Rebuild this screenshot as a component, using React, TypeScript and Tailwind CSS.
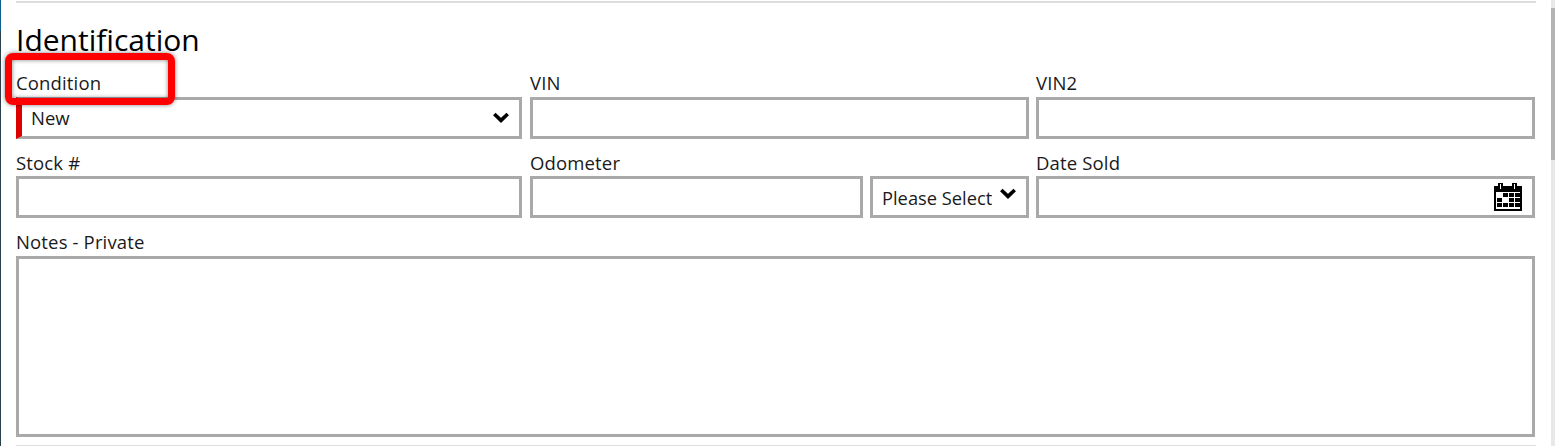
import React from "react";

const font = { fontFamily: '"Open Sans", "Noto Sans", sans-serif' };

function Chevron({ className }: { className?: string }) {
  return (
    <svg viewBox="0 0 16 11" className={className} fill="none" stroke="#000" strokeWidth="3.6">
      <path d="M1.3 2 8 8.4 14.7 2" />
    </svg>
  );
}

function Calendar() {
  const cells = [
    [0, 1, 1, 1],
    [1, 2, 1, 1],
    [1, 1, 1, 1],
  ];
  return (
    <svg width="29" height="29" viewBox="0 0 29 29" shapeRendering="crispEdges">
      <rect x="1" y="4" width="28" height="25" fill="#000" />
      <rect x="5" y="1" width="5" height="7" fill="#000" />
      <rect x="19" y="1" width="5" height="7" fill="#000" />
      <rect x="7" y="2" width="1" height="5" fill="#fff" />
      <rect x="21" y="2" width="1" height="5" fill="#fff" />
      <rect x="3" y="10" width="24" height="17" fill="#fff" />
      {cells.map((row, r) =>
        row.map((c, i) =>
          c === 0 ? null : (
            <rect
              key={`${r}-${i}`}
              x={4 + i * 6}
              y={11 + r * 5}
              width="5"
              height="4"
              fill={c === 2 ? "#fff" : "#000"}
            />
          )
        )
      )}
    </svg>
  );
}

function Label({ children }: { children: React.ReactNode }) {
  return (
    <div className="h-[21px] text-[18.5px] leading-[21px] tracking-[0.15px] text-[#1a1a1a] whitespace-nowrap">
      {children}
    </div>
  );
}

function Field({
  label,
  children,
  className,
}: {
  label: string;
  children?: React.ReactNode;
  className?: string;
}) {
  return (
    <div className={`flex min-w-0 flex-col ${className ?? "gap-[3px]"}`}>
      <Label>{label}</Label>
      {children ?? <div className="h-[42px] border-[3px] border-[#a9a9a9] bg-white" />}
    </div>
  );
}

export default function App() {
  return (
    <div className="relative h-[446px] w-[1555px] overflow-hidden bg-white" style={font}>
      <div className="flex h-full">
        <div className="w-[1px] shrink-0 bg-gradient-to-b from-[#0f5f8f] from-[7%] to-[#2b3f4c] to-[7%]" />
        <main className="ml-[15px] flex w-[1520px] flex-col pt-[1px]">
          <div className="h-[2px] bg-[#dddddd]" />
          <h1 className="mt-[17px] h-[40px] text-[30px] leading-[40px] text-black">Identification</h1>
          <div className="mt-[12px] grid grid-cols-[514px_506px_499px] gap-y-[13px]">
            <Field label="Condition" className="gap-[4px] pr-[8px]">
              <div className="flex h-[42px] items-center justify-between border-[3px] border-l-[6px] border-[#a9a9a9] border-l-[#dd0000] bg-white pl-[9px] pr-[10px]">
                <span className="pt-[1px] text-[18.5px] text-[#1a1a1a]">New</span>
                <Chevron className="h-[11px] w-[16px]" />
              </div>
            </Field>
            <Field label="VIN" className="gap-[4px] pr-[7px]" />
            <Field label="VIN2" className="gap-[4px]" />
            <Field label="Stock #" className="gap-[3px] pr-[8px]" />
            <Field label="Odometer" className="gap-[3px] pr-[7px]">
              <div className="flex gap-[7px]">
                <div className="h-[42px] w-[333px] border-[3px] border-[#a9a9a9]" />
                <div className="relative flex h-[42px] w-[159px] items-center overflow-hidden border-[3px] border-[#a9a9a9] bg-white pl-[9px]">
                  <span className="pt-[3px] text-[18.3px] whitespace-nowrap text-[#1a1a1a]">Please Select</span>
                  <div className="absolute right-0 top-0 flex h-full w-[34px] justify-center bg-white pr-[2px] pt-[9px]">
                    <Chevron className="h-[11px] w-[16px]" />
                  </div>
                </div>
              </div>
            </Field>
            <Field label="Date Sold">
              <div className="flex h-[42px] items-center justify-end border-[3px] border-[#a9a9a9] bg-white pr-[10px]">
                <Calendar />
              </div>
            </Field>
          </div>
          <div className="mt-[13px] flex flex-col gap-[4px]">
            <Label>Notes - Private</Label>
            <div className="h-[181px] w-[1519px] border-[3px] border-[#a9a9a9]" />
          </div>
          <div className="mt-[8px] h-[2px] bg-[#dddddd]" />
        </main>
      </div>
      <div className="absolute left-[5px] top-[53px] h-[52px] w-[170px] rounded-[8px] border-[7px] border-[#ff0000] shadow-[0_0_4px_rgba(0,0,0,0.5),inset_0_0_4px_rgba(0,0,0,0.5)]" />
      <div className="absolute right-0 top-0 h-full w-[4px] bg-[#e8e8e8]">
        <div className="mt-[8px] h-[152px] bg-[#b4b4b4]" />
      </div>
    </div>
  );
}
